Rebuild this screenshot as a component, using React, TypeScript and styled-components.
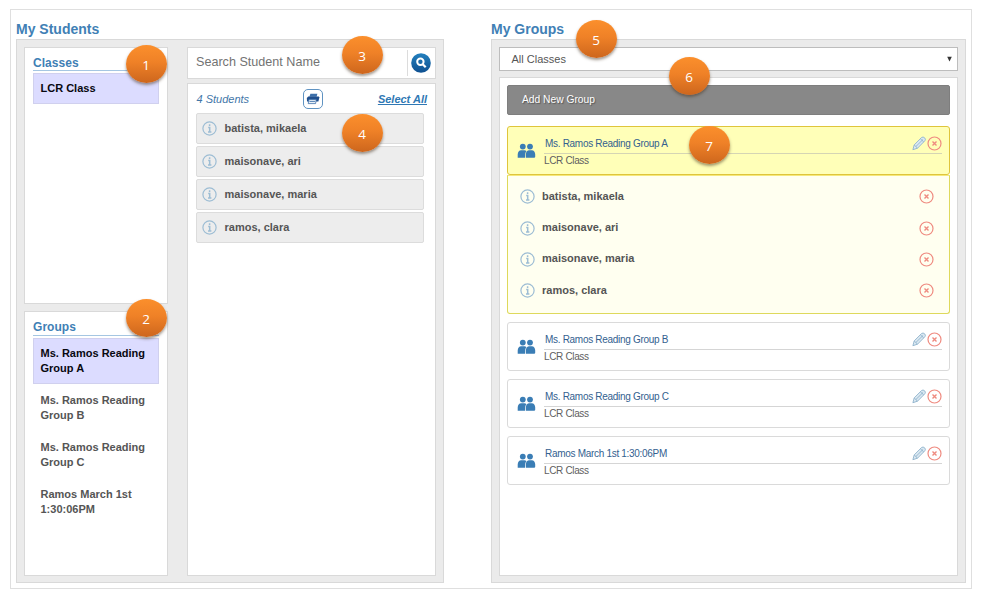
import React from "react";
import styled, { createGlobalStyle, css } from "styled-components";

const GlobalStyle = createGlobalStyle`
  body {
    margin: 0;
    background: #fff;
    font-family: "Liberation Sans", Arial, sans-serif;
    font-size: 11px;
    color: #555;
  }
  *, *::before, *::after { box-sizing: border-box; }
`;

const Page = styled.div`
  position: relative;
  width: 982px;
  height: 595px;
  padding: 9px 0 0 10px;
  overflow: hidden;
`;

const Frame = styled.main`
  display: flex;
  justify-content: space-between;
  width: 962px;
  height: 580px;
  padding: 0 5px 5px;
  border: 1px solid #dfdfdf;
`;

const Column = styled.section<{ $width: number }>`
  display: flex;
  flex-direction: column;
  width: ${(p) => p.$width}px;
`;

const Title = styled.h1`
  height: 29px;
  margin: 0;
  padding-top: 9px;
  font-size: 14px;
  line-height: 20px;
  color: #4180b5;
`;

const Tray = styled.div<{ $row?: boolean }>`
  display: flex;
  flex: 1;
  flex-direction: ${(p) => (p.$row ? "row" : "column")};
  gap: ${(p) => (p.$row ? 19 : 6)}px;
  padding: 7px 7px 6px;
  background: #ebebeb;
  border: 1px solid #d9d9d9;
`;

const Stack = styled.div<{ $width: number; $gap: number }>`
  display: flex;
  flex-direction: column;
  gap: ${(p) => p.$gap}px;
  width: ${(p) => p.$width}px;
`;

const box = css`
  background: #fff;
  border: 1px solid #d9d9d9;
`;

const SidePanel = styled.section<{ $height?: number }>`
  ${box}
  padding: 8px;
  ${(p) => (p.$height ? `height: ${p.$height}px;` : "flex: 1;")}
`;

const PanelHeading = styled.h2<{ $height: number }>`
  height: ${(p) => p.$height}px;
  margin: 0 0 2px;
  font-size: 12px;
  line-height: 15px;
  letter-spacing: 0.05px;
  color: #3f80b5;
  border-bottom: 1px solid #a5c6e2;
`;

const SideItem = styled.div<{ $active?: boolean }>`
  margin-bottom: 1px;
  padding: 7px 6px 7px 6.5px;
  border: 1px solid ${(p) => (p.$active ? "#d0d0ee" : "transparent")};
  background: ${(p) => (p.$active ? "#dcdcff" : "transparent")};
  color: ${(p) => (p.$active ? "#080810" : "#555")};
  font-weight: bold;
  line-height: 15px;
`;

const SearchBar = styled.div`
  ${box}
  display: flex;
  align-items: center;
  height: 32px;
  padding: 0 4px 0 8px;
  font-size: 12.6px;
  color: #737373;
`;

const SearchText = styled.span`
  flex: 1;
  padding-bottom: 2px;
`;

const SearchButton = styled.span`
  display: flex;
  align-items: center;
  height: 26px;
  padding-left: 3px;
  border-left: 1px solid #dcdcdc;
`;

const StudentPanel = styled.section`
  ${box}
  flex: 1;
  padding: 4px 11px 0 8px;
`;

const StudentHeader = styled.div`
  display: flex;
  align-items: center;
  justify-content: space-between;
  height: 22px;
  margin-right: -3px;
  margin-bottom: 3px;
  padding-left: 0.5px;
  font-style: italic;
  color: #4276a8;
`;

const PrintButton = styled.span`
  display: flex;
  align-items: center;
  justify-content: center;
  width: 20px;
  height: 20px;
  border: 1px solid #5f93c2;
  border-radius: 5px;
  background: #fff;
`;

const SelectAll = styled.span`
  font-weight: bold;
  text-decoration: underline;
  color: #2f78b4;
`;

const StudentList = styled.div`
  display: flex;
  flex-direction: column;
  gap: 2px;
`;

const StudentRow = styled.div`
  display: flex;
  align-items: center;
  gap: 7.5px;
  height: 31px;
  padding: 0 6px 0 5px;
  background: #ededed;
  border: 1px solid #dcdcdc;
  border-radius: 2px;
`;

const StudentName = styled.span`
  flex: 1;
  padding-bottom: 1px;
  font-weight: bold;
  line-height: 13px;
`;

const Select = styled.div`
  display: flex;
  align-items: center;
  justify-content: space-between;
  height: 24px;
  padding: 0 5px 1px 11.5px;
  background: #fff;
  border: 1px solid #bdbdbd;
`;

const GroupsPanel = styled.section`
  ${box}
  flex: 1;
  padding: 7px 7px 0;
`;

const AddButton = styled.div`
  height: 30px;
  margin-bottom: 11px;
  padding-left: 14px;
  background: #888;
  border: 1px solid #7e7e7e;
  border-radius: 2px;
  font-size: 10.25px;
  line-height: 28px;
  color: #fff;
  text-shadow: 1px 1px 1px #555;
`;

const GroupCard = styled.article<{ $open?: boolean }>`
  display: flex;
  align-items: center;
  gap: 8px;
  height: 49px;
  margin-bottom: ${(p) => (p.$open ? 0 : 8.2)}px;
  padding: 0 7px 0 9px;
  background: ${(p) => (p.$open ? "#ffffb8" : "#fff")};
  border: 1px solid ${(p) => (p.$open ? "#dfc53c" : "#dadada")};
  border-radius: 3px;
`;

const GroupInfo = styled.div`
  flex: 1;
  padding-top: 1px;
  font-size: 10px;
`;

const GroupNameRow = styled.div<{ $open?: boolean }>`
  display: flex;
  align-items: center;
  height: 20px;
  padding-left: 1px;
  border-bottom: 1px solid ${(p) => (p.$open ? "#d5d5b4" : "#d5d5d5")};
  color: #33618f;
`;

const GroupName = styled.span`
  flex: 1;
  letter-spacing: -0.3px;
`;

const GroupClass = styled.div`
  height: 14px;
  line-height: 13px;
  letter-spacing: -0.35px;
  color: #606060;
`;

const Members = styled.div`
  height: 139px;
  margin-bottom: 8px;
  padding: 5px 15.5px 0 11.5px;
  background: #fffff0;
  border: 1px solid #ded95c;
  border-top-color: #f5e87c;
  border-radius: 0 0 3px 3px;
`;

const MemberRow = styled.div`
  display: flex;
  align-items: center;
  gap: 7.5px;
  height: 31.4px;
`;

const Badge = styled.div<{ $x: number; $y: number }>`
  position: absolute;
  left: ${(p) => p.$x}px;
  top: ${(p) => p.$y}px;
  width: 41px;
  height: 38px;
  border-radius: 50%;
  background: linear-gradient(#fb8f2c, #ef8127 45%, #cd661d);
  box-shadow: 0 2px 3px rgba(70, 50, 30, 0.5);
  font-family: "Open Sans", "Noto Sans", sans-serif;
  font-size: 13.5px;
  line-height: 40px;
  text-align: center;
  text-indent: -1px;
  color: #fff;
`;

const Icon = styled.svg`
  display: block;
  flex: none;
`;

const InfoIcon = () => (
  <Icon width="15" height="15" viewBox="0 0 15 15" fill="none" stroke="#9dbdd4">
    <circle cx="7.5" cy="7.5" r="6.6" strokeWidth="1.2" />
    <path d="M7.6 3.2v1.8M6.2 6.5h1.5v4.2M6 11h3.4" strokeWidth="1.5" />
  </Icon>
);

const RemoveIcon = () => (
  <Icon width="15" height="15" viewBox="0 0 15 15" fill="none" stroke="#ef8b80">
    <circle cx="7.5" cy="7.5" r="6.5" strokeWidth="1.2" />
    <path d="M5.5 5.5l4 4M9.5 5.5L5.5 9.5" strokeWidth="1.4" />
  </Icon>
);

const PencilIcon = () => (
  <Icon width="15" height="15" viewBox="0 0 15 15" fill="#dce9f2" stroke="#8fb2cc" strokeWidth="0.9">
    <path d="M.9 13.7l1.3-4.8L9.6 1.5q1.5-1.1 3 .3t.3 2.9L5.5 12.2z" />
    <path d="M2.2 8.9l3.3 3.3M8.4 2.8l3.3 3.1M3.9 10.5l7.2-7.1" />
  </Icon>
);

const PeopleIcon = () => (
  <Icon width="19" height="16" viewBox="0 0 19 16" fill="#3a7db5">
    <circle cx="5.8" cy="3.6" r="2.9" />
    <circle cx="13" cy="3.6" r="2.9" />
    <path d="M.7 14.8v-3.2Q.9 7.4 4.2 7.2h3.2q1.3.2 2 1Q8 9.4 8 14.8z" />
    <path d="M8.8 14.8v-2.7q.2-4.7 3-4.9h3Q18 7.4 18.2 11.6v2.2q-.1 1-1 1z" />
  </Icon>
);

const PrintIcon = () => (
  <Icon width="14" height="12" viewBox="0 0 14 12">
    <path d="M4.4.8h7l-.8 3H3.4z" fill="#3d70aa" />
    <path d="M2.2 3.4h10.6l.6 1.2-1 4H1L.8 5z" fill="#1f4f8e" />
    <path d="M3 6.4h7.2l-.6 4.2H2.2z" fill="#e8f0f8" stroke="#3d70aa" strokeWidth="0.8" />
    <path d="M3.5 8.4h5.5" stroke="#3d70aa" strokeWidth="0.9" />
  </Icon>
);

const SearchIcon = () => (
  <Icon width="20" height="20" viewBox="0 0 20 20">
    <defs>
      <linearGradient id="searchFill" x1="0" y1="0" x2="0" y2="1">
        <stop offset="0" stopColor="#2380be" />
        <stop offset="1" stopColor="#0f5090" />
      </linearGradient>
    </defs>
    <circle cx="10" cy="10" r="9.8" fill="url(#searchFill)" />
    <circle cx="9.4" cy="8.8" r="3.2" fill="none" stroke="#fff" strokeWidth="2" />
    <path d="M11.7 11.2l3 3" stroke="#fff" strokeWidth="2.2" />
  </Icon>
);

const CaretIcon = () => (
  <Icon width="5" height="6" viewBox="0 0 5 6" fill="#333">
    <path d="M.2.8h4.6L2.5 5.4z" />
  </Icon>
);

const students = ["batista, mikaela", "maisonave, ari", "maisonave, maria", "ramos, clara"];
const groups = [
  "Ms. Ramos Reading Group A",
  "Ms. Ramos Reading Group B",
  "Ms. Ramos Reading Group C",
  "Ramos March 1st 1:30:06PM",
];
const badges = [
  [126, 45],
  [126, 299],
  [342, 36],
  [342, 114],
  [576, 20],
  [669, 57],
  [689, 126],
];

const Group = ({ name, open }: { name: string; open?: boolean }) => (
  <>
    <GroupCard $open={open}>
      <PeopleIcon />
      <GroupInfo>
        <GroupNameRow $open={open}>
          <GroupName>{name}</GroupName>
          <PencilIcon />
          <RemoveIcon />
        </GroupNameRow>
        <GroupClass>LCR Class</GroupClass>
      </GroupInfo>
    </GroupCard>
    {open && (
      <Members>
        {students.map((s) => (
          <MemberRow key={s}>
            <InfoIcon />
            <StudentName>{s}</StudentName>
            <RemoveIcon />
          </MemberRow>
        ))}
      </Members>
    )}
  </>
);

export default function App() {
  return (
    <Page>
      <GlobalStyle />
      <Frame>
        <Column $width={428}>
          <Title>My Students</Title>
          <Tray $row>
            <Stack $width={144} $gap={7}>
              <SidePanel $height={257}>
                <PanelHeading $height={15}>Classes</PanelHeading>
                <SideItem $active>LCR Class</SideItem>
              </SidePanel>
              <SidePanel>
                <PanelHeading $height={16}>Groups</PanelHeading>
                {groups.map((g, i) => (
                  <SideItem key={g} $active={i === 0}>
                    {g}
                  </SideItem>
                ))}
              </SidePanel>
            </Stack>
            <Stack $width={249} $gap={4}>
              <SearchBar>
                <SearchText>Search Student Name</SearchText>
                <SearchButton>
                  <SearchIcon />
                </SearchButton>
              </SearchBar>
              <StudentPanel>
                <StudentHeader>
                  <span>4 Students</span>
                  <PrintButton>
                    <PrintIcon />
                  </PrintButton>
                  <SelectAll>Select All</SelectAll>
                </StudentHeader>
                <StudentList>
                  {students.map((s) => (
                    <StudentRow key={s}>
                      <InfoIcon />
                      <StudentName>{s}</StudentName>
                    </StudentRow>
                  ))}
                </StudentList>
              </StudentPanel>
            </Stack>
          </Tray>
        </Column>
        <Column $width={475}>
          <Title>My Groups</Title>
          <Tray>
            <Select>
              <span>All Classes</span>
              <CaretIcon />
            </Select>
            <GroupsPanel>
              <AddButton>Add New Group</AddButton>
              {groups.map((g, i) => (
                <Group key={g} name={g} open={i === 0} />
              ))}
            </GroupsPanel>
          </Tray>
        </Column>
      </Frame>
      {badges.map(([x, y], i) => (
        <Badge key={i} $x={x} $y={y}>
          {i + 1}
        </Badge>
      ))}
    </Page>
  );
}
